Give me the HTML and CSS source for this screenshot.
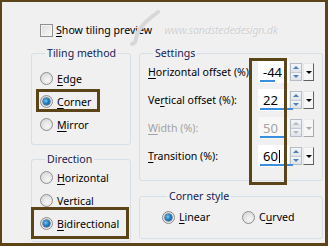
FILE: index.html
```html
<!DOCTYPE html>
<html lang="en">
<head>
  <meta charset="UTF-8" />
  <title>Seamless Tiling</title>
  <link rel="stylesheet" href="styles.css">
</head>
<body>
  <div class="dialog">
    <div class="top">
      <label class="check"><input type="checkbox" /><span><u>S</u>how tiling preview</span></label>
      <span class="watermark">www.sandstededesign.dk</span>
      <svg class="swoosh" width="34" height="36" viewBox="0 0 34 36">
        <path d="M30 2 C22 8 14 14 10 22 C7 28 9 33 4 34" fill="none" stroke="#d8d8d8" stroke-width="4" stroke-linecap="round" />
      </svg>
    </div>

    <div class="columns">
      <div class="col">
        <fieldset class="group tiling">
          <legend>Tiling method</legend>
          <label class="radio"><input type="radio" name="method" /><span><u>E</u>dge</span></label>
          <label class="radio mark-corner"><input type="radio" name="method" checked /><span><u>C</u>orner</span></label>
          <label class="radio"><input type="radio" name="method" /><span><u>M</u>irror</span></label>
        </fieldset>

        <fieldset class="group direction">
          <legend>Direction</legend>
          <label class="radio"><input type="radio" name="dir" /><span><u>H</u>orizontal</span></label>
          <label class="radio"><input type="radio" name="dir" /><span><u>V</u>ertical</span></label>
          <label class="radio mark-bidir"><input type="radio" name="dir" checked /><span><u>B</u>idirectional</span></label>
        </fieldset>
      </div>

      <div class="col">
        <fieldset class="group settings">
          <legend>Settings</legend>
          <div class="rows">
            <div class="row">
              <span class="label"><u>H</u>orizontal offset (%):</span>
              <div class="field"><span>-44</span><i class="bar" style="width:15px"></i></div>
              <div class="spin"><b class="up"></b><b class="down"></b></div>
              <div class="drop"></div>
            </div>
            <div class="row">
              <span class="label">Ve<u>r</u>tical offset (%):</span>
              <div class="field"><span>22</span><i class="bar" style="width:33px"></i></div>
              <div class="spin"><b class="up"></b><b class="down"></b></div>
              <div class="drop"></div>
            </div>
            <div class="row disabled">
              <span class="label"><u>W</u>idth (%):</span>
              <div class="field"><span>50</span><i class="bar" style="width:26px"></i></div>
              <div class="spin"><b class="up"></b><b class="down"></b></div>
              <div class="drop"></div>
            </div>
            <div class="row">
              <span class="label"><u>T</u>ransition (%):</span>
              <div class="field"><span>60</span><em class="caret"></em><i class="bar" style="width:33px"></i></div>
              <div class="spin"><b class="up"></b><b class="down"></b></div>
              <div class="drop"></div>
            </div>
          </div>
        </fieldset>

        <fieldset class="group corner-style">
          <legend>Corner style</legend>
          <div class="inline">
            <label class="radio"><input type="radio" name="corner" checked /><span><u>L</u>inear</span></label>
            <label class="radio"><input type="radio" name="corner" /><span>C<u>u</u>rved</span></label>
          </div>
        </fieldset>
      </div>
    </div>

    <div class="value-mark"></div>
  </div>
</body>
</html>
```

FILE: styles.css
```css
body {
  margin: 0;
  font-family: "Noto Sans", "Open Sans", sans-serif;
  font-size: 10.6px;
  color: #000;
  background: #f0f0f0;
}
u {
  text-decoration-thickness: 1px;
  text-underline-offset: 2px;
}
.dialog {
  position: relative;
  width: 328px;
  height: 246px;
  box-sizing: border-box;
  border: solid #5b4418;
  border-width: 2px 3px 3px 2px;
  background: #f0f0f0;
  overflow: hidden;
}
.top {
  display: flex;
  align-items: center;
  height: 16px;
  padding: 20px 0 0 38px;
}
.check {
  display: flex;
  align-items: center;
  gap: 3px;
}
input[type="checkbox"] {
  appearance: none;
  margin: 0;
  width: 13px;
  height: 13px;
  border: 1px solid #8e8f8f;
  background: linear-gradient(135deg, #dcdcdc, #f8f8f8);
  box-shadow: inset 0 0 0 1px #f4f4f4;
  box-sizing: border-box;
}
.watermark {
  margin-left: 12px;
  color: #d0d0d0;
  font-style: italic;
  letter-spacing: -0.2px;
  text-shadow: 0 0 2px #fff;
}
.swoosh {
  position: absolute;
  left: 126px;
  top: 8px;
}
.columns {
  display: grid;
  grid-template-columns: 100px 184px;
  column-gap: 8px;
  padding: 8px 0 0 29px;
}
.group {
  margin: 0;
  padding: 0;
  border: 1px solid #d5dfe5;
  border-radius: 3px;
  min-width: 0;
}
.group legend {
  margin-left: 5px;
  padding: 0 2px;
  line-height: 14px;
  color: #151c55;
}
.radio {
  display: flex;
  align-items: center;
  gap: 4px;
  height: 23px;
  position: relative;
}
input[type="radio"] {
  appearance: none;
  margin: 0;
  width: 13px;
  height: 13px;
  border-radius: 50%;
  border: 1px solid #8e8f8f;
  background: radial-gradient(circle at 60% 65%, #f6f6f6 0, #e6e6e6 45%, #cfcfcf 100%);
  box-sizing: border-box;
  position: relative;
}
input[type="radio"]:checked::after {
  content: "";
  position: absolute;
  left: 2px;
  top: 2px;
  width: 7px;
  height: 7px;
  border-radius: 50%;
  background: radial-gradient(circle at 40% 40%, #7cc8f0 0, #1f7fc6 45%, #0b3f78 100%);
  box-shadow: 0 0 0 0.5px #1d3f6a;
}
.tiling {
  padding: 7px 0 8px 8px;
}
.direction {
  margin-top: 7px;
  padding: 0 0 6px 8px;
}
.mark-corner::after,
.mark-bidir::after,
.value-mark {
  content: "";
  position: absolute;
  box-sizing: border-box;
  border: 3px solid #5b4418;
}
.mark-corner::after {
  left: -4px;
  top: -1px;
  width: 64px;
  height: 23px;
}
.mark-bidir::after {
  left: -9px;
  top: -5px;
  width: 98px;
  height: 32px;
}
.value-mark {
  left: 247px;
  top: 56px;
  width: 38px;
  height: 127px;
}
.settings {
  padding: 0 9px 10px 8px;
}
.rows {
  margin-top: -2px;
}
.row {
  display: grid;
  grid-template-columns: 109px 31px 12px 11px;
  column-gap: 1px;
  align-items: center;
  height: 28px;
}
.field {
  position: relative;
  height: 22px;
  background: #fff;
  display: flex;
  align-items: center;
  padding-left: 5px;
  box-sizing: border-box;
  font-size: 13px;
}
.bar {
  position: absolute;
  left: 2px;
  bottom: 1px;
  height: 2px;
  background: #3a8ee2;
}
.caret {
  width: 1px;
  height: 13px;
  background: #000;
  margin-left: 1px;
}
.spin {
  height: 18px;
  display: flex;
  flex-direction: column;
  border: 1px solid #b5bcc6;
  box-sizing: border-box;
}
.spin b {
  flex: 1;
  display: flex;
  align-items: center;
  justify-content: center;
  background: linear-gradient(#f4f6f9, #dde3ea);
}
.spin b::after {
  content: "";
  border-left: 3px solid transparent;
  border-right: 3px solid transparent;
}
.spin .up {
  border-bottom: 1px solid #c3cad3;
}
.spin .up::after {
  border-bottom: 3px solid #4f7fb4;
}
.spin .down::after {
  border-top: 3px solid #4f7fb4;
}
.drop {
  height: 18px;
  box-sizing: border-box;
  border: 1px solid;
  border-color: #e6e6e6 #5f5f5f #5f5f5f #e6e6e6;
  background: #f6f6f6;
  display: flex;
  align-items: center;
  justify-content: center;
}
.drop::after {
  content: "";
  border-left: 3px solid transparent;
  border-right: 3px solid transparent;
  border-top: 3px solid #000;
}
.disabled .label,
.disabled .field {
  color: #a3a3a3;
}
.disabled .field {
  background: #f7f7f7;
}
.disabled .spin b::after {
  border-bottom-color: #b9b9b9;
  border-top-color: #b9b9b9;
}
.disabled .drop {
  border-color: #ececec #a8a8a8 #a8a8a8 #ececec;
}
.disabled .drop::after {
  border-top-color: #a8a8a8;
}
.corner-style {
  margin-top: 8px;
  padding: 3px 0 10px 22px;
}
.inline {
  display: flex;
}
.inline .radio {
  height: 22px;
  width: 82px;
}
```
